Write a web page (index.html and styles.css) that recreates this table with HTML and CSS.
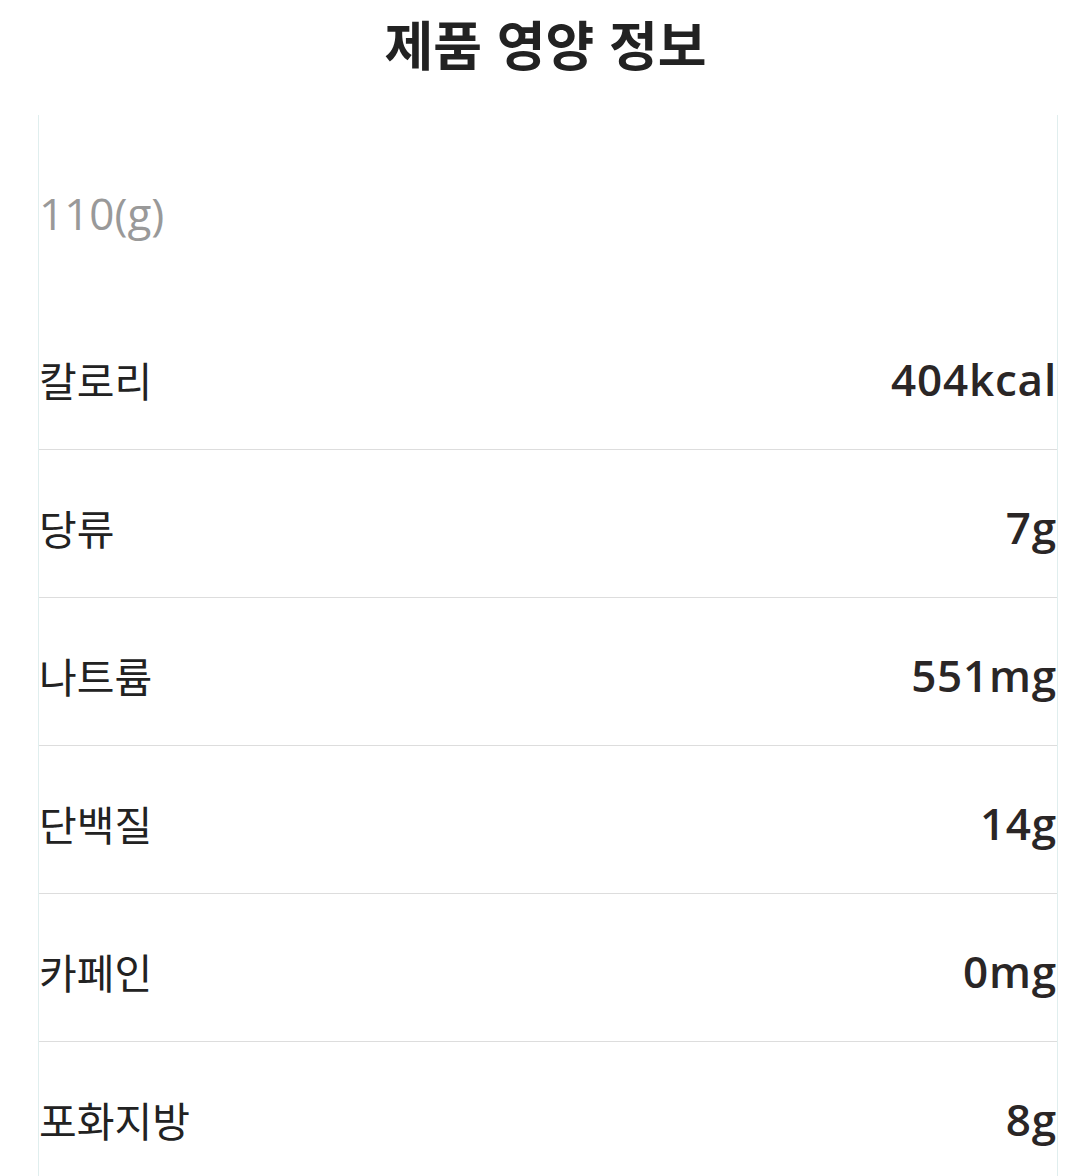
FILE: index.html
```html
<!DOCTYPE html>
<html lang="ko">
<head>
<meta charset="utf-8">
<link rel="stylesheet" href="styles.css">
</head>
<body>
<h1 class="title">제품 영양 정보</h1>
<div class="panel">
  <div class="serving">110(g)</div>
  <div class="row"><span class="label">칼로리</span><span class="value">404kcal</span></div>
  <div class="row"><span class="label">당류</span><span class="value">7g</span></div>
  <div class="row"><span class="label">나트륨</span><span class="value">551mg</span></div>
  <div class="row"><span class="label">단백질</span><span class="value">14g</span></div>
  <div class="row"><span class="label">카페인</span><span class="value">0mg</span></div>
  <div class="row last"><span class="label">포화지방</span><span class="value">8g</span></div>
</div>
</body>
</html>
```
FILE: styles.css
```css
html, body {
  margin: 0;
  padding: 0;
  background: #fff;
}
body {
  font-family: "Open Sans", "Noto Sans CJK KR", sans-serif;
  color: #231f20;
}
.title {
  margin: 0;
  height: 115px;
  box-sizing: border-box;
  padding-top: 10px;
  text-align: center;
  font-family: "Noto Sans CJK KR", sans-serif;
  font-size: 53px;
  font-weight: 700;
  line-height: 66px;
  color: #222;
}
.panel {
  margin: 0 33px 0 38px;
  border-left: 1px solid #e0eeee;
  border-right: 1px solid #e0eeee;
}
.serving {
  height: 187px;
  display: flex;
  align-items: center;
  font-size: 44px;
  color: #999;
  padding-top: 8px;
  box-sizing: border-box;
}
.row {
  height: 148px;
  display: flex;
  align-items: center;
  justify-content: space-between;
  border-bottom: 1px solid #dddddd;
  box-sizing: border-box;
  padding-top: 6px;
}
.row.last {
  border-bottom: none;
}
.label {
  font-family: "Noto Sans CJK KR", sans-serif;
  font-size: 41px;
  color: #222;
}
.value {
  font-size: 44px;
  font-weight: 600;
  letter-spacing: 0.8px;
  color: #2a2626;
}
```
